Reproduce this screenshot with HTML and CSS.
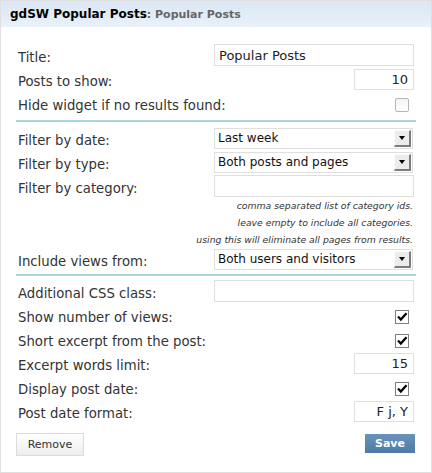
FILE: index.html
```html
<!DOCTYPE html>
<html>
<head>
<meta charset="utf-8">
<link rel="stylesheet" href="styles.css">
</head>
<body>
<div class="widget">
  <div class="widget-top">
    <h4>gdSW Popular Posts<span class="in-title">: Popular Posts</span></h4>
  </div>
  <div class="widget-inside">
    <div class="row"><label>Title:</label><input class="field wide" type="text" value="Popular Posts"></div>
    <div class="row"><label>Posts to show:</label><input class="field num" type="text" value="10"></div>
    <div class="row"><label>Hide widget if no results found:</label><span class="check"></span></div>
    <div class="sep"></div>
    <div class="row"><label>Filter by date:</label><div class="select"><span class="val">Last week</span><span class="arrow"></span></div></div>
    <div class="row"><label>Filter by type:</label><div class="select"><span class="val">Both posts and pages</span><span class="arrow"></span></div></div>
    <div class="row"><label>Filter by category:</label><input class="field wide" type="text" value=""></div>
    <div class="help">
      <div>comma separated list of category ids.</div>
      <div>leave empty to include all categories.</div>
      <div>using this will eliminate all pages from results.</div>
    </div>
    <div class="row"><label>Include views from:</label><div class="select"><span class="val">Both users and visitors</span><span class="arrow"></span></div></div>
    <div class="sep sep2"></div>
    <div class="row"><label>Additional CSS class:</label><input class="field wide" type="text" value=""></div>
    <div class="row"><label>Show number of views:</label><span class="check on"><svg width="14" height="14" viewBox="0 0 14 14"><path d="M3 6.5 L5.8 9.5 L11.5 3.2" fill="none" stroke="#000" stroke-width="2.2"/></svg></span></div>
    <div class="row"><label>Short excerpt from the post:</label><span class="check on"><svg width="14" height="14" viewBox="0 0 14 14"><path d="M3 6.5 L5.8 9.5 L11.5 3.2" fill="none" stroke="#000" stroke-width="2.2"/></svg></span></div>
    <div class="row"><label>Excerpt words limit:</label><input class="field num" type="text" value="15"></div>
    <div class="row"><label>Display post date:</label><span class="check on"><svg width="14" height="14" viewBox="0 0 14 14"><path d="M3 6.5 L5.8 9.5 L11.5 3.2" fill="none" stroke="#000" stroke-width="2.2"/></svg></span></div>
    <div class="row"><label>Post date format:</label><input class="field num" type="text" value="F j, Y"></div>
    <div class="actions">
      <button class="btn-remove">Remove</button>
      <button class="btn-save">Save</button>
    </div>
  </div>
</div>
</body>
</html>
```
FILE: styles.css
```css
body {
  margin: 0;
  font-family: "DejaVu Sans", Verdana, sans-serif;
}
.widget {
  width: 432px;
  height: 473px;
  box-sizing: border-box;
  border: 1px solid #dfdfdf;
  background: #fff;
}
.widget-top {
  height: 26px;
  background: linear-gradient(#dbe7f4, #e9f1f9);
  display: flex;
  align-items: center;
  padding-left: 9px;
}
.widget-top h4 {
  margin: 0;
  font-size: 12px;
  font-weight: bold;
  color: #000;
}
.in-title {
  font-size: 11px;
  color: #666;
}
.widget-inside {
  padding: 16px 17px 0 17px;
}
.row {
  display: flex;
  align-items: center;
  justify-content: space-between;
  height: 24px;
}
.row label {
  padding-top: 4px;
  font-size: 13.25px;
  color: #333;
}
.field {
  box-sizing: border-box;
  border: 1px solid #dfdfdf;
  height: 22px;
  margin: 0;
  padding: 0 4px;
  font-family: "DejaVu Sans", Verdana, sans-serif;
  font-size: 13px;
  color: #222;
  background: #fff;
  outline: none;
}
.wide {
  width: 200px;
}
.num {
  width: 60px;
  height: 21px;
  text-align: right;
  padding-right: 5px;
}
.check {
  box-sizing: border-box;
  width: 14px;
  height: 14px;
  margin-top: 4px;
  margin-right: 5px;
  border: 1px solid #b5b5b5;
  border-radius: 2px;
  background: linear-gradient(#f4f4f4, #fff);
  display: flex;
  align-items: center;
  justify-content: center;
}
.check.on {
  border: 1px solid #7f7f7f;
  border-radius: 0;
  background: #fff;
}
.check svg {
  display: block;
  flex: none;
}
.sep {
  height: 2px;
  background: #a9d5e3;
  margin: 5px -2px 4px;
}
.sep2 {
  margin: 3px -2px 3px;
}
.select {
  box-sizing: border-box;
  width: 199px;
  height: 21px;
  margin-right: 1px;
  border: 1px solid #dfdfdf;
  display: flex;
  align-items: center;
  justify-content: space-between;
  background: #fff;
}
.select .val {
  padding-left: 3px;
  font-size: 12px;
  color: #111;
}
.select .arrow {
  box-sizing: border-box;
  width: 17px;
  height: 17px;
  margin-right: 1px;
  background: #ececec;
  border-style: solid;
  border-width: 1px 2px 2px 1px;
  border-color: #fafafa #7d7d7d #7d7d7d #fafafa;
  display: flex;
  align-items: center;
  justify-content: center;
}
.select .arrow::after {
  content: "";
  border-left: 3.5px solid transparent;
  border-right: 3.5px solid transparent;
  border-top: 4px solid #000;
}
.help {
  margin-top: -1px;
  margin-bottom: -1px;
  padding-right: 1px;
  text-align: right;
  font-size: 9.3px;
  font-style: italic;
  line-height: 17px;
  color: #333;
}
.actions {
  margin-top: 10px;
  display: flex;
  justify-content: space-between;
  align-items: flex-start;
}
.btn-remove {
  margin-left: -2px;
  width: 68px;
  height: 23px;
  border: 1px solid #dcdcdc;
  background: linear-gradient(#fff, #eeeeee);
  font-family: "DejaVu Sans", Verdana, sans-serif;
  font-size: 11px;
  color: #333;
  padding: 0;
}
.btn-save {
  margin-top: 1px;
  margin-right: -1px;
  width: 50px;
  height: 19px;
  border: none;
  background: linear-gradient(#6a93bb, #4e7aa5);
  font-family: "DejaVu Sans", Verdana, sans-serif;
  font-size: 11px;
  font-weight: bold;
  color: #fff;
  padding: 0;
}
```
